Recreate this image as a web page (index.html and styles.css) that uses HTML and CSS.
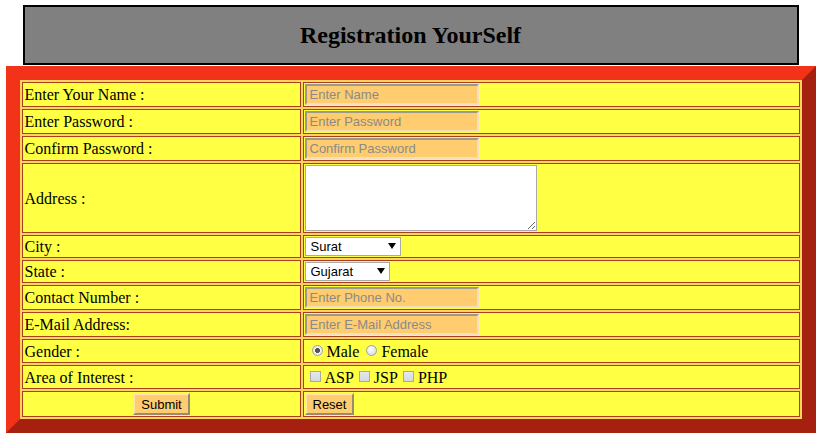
FILE: index.html
```html
<!DOCTYPE html>
<html>
<head>
<meta charset="utf-8">
<title>Registration</title>
<link rel="stylesheet" href="styles.css">
</head>
<body>
<div class="header"><h2 class="title">Registration YourSelf</h2></div>
<form class="form">
<table class="reg">
  <tr>
    <td class="label">Enter Your Name :</td>
    <td class="field"><input class="text" type="text" placeholder="Enter Name"></td>
  </tr>
  <tr>
    <td class="label">Enter Password :</td>
    <td class="field"><input class="text" type="password" placeholder="Enter Password"></td>
  </tr>
  <tr>
    <td class="label">Confirm Password :</td>
    <td class="field"><input class="text" type="password" placeholder="Confirm Password"></td>
  </tr>
  <tr>
    <td class="label">Address :</td>
    <td class="field"><textarea class="area"></textarea></td>
  </tr>
  <tr>
    <td class="label">City :</td>
    <td class="field"><span class="sel sel-city"><select class="select"><option>Surat</option></select></span></td>
  </tr>
  <tr>
    <td class="label">State :</td>
    <td class="field"><span class="sel sel-state"><select class="select"><option>Gujarat</option></select></span></td>
  </tr>
  <tr>
    <td class="label">Contact Number :</td>
    <td class="field"><input class="text" type="text" placeholder="Enter Phone No."></td>
  </tr>
  <tr>
    <td class="label">E-Mail Address:</td>
    <td class="field"><input class="text" type="text" placeholder="Enter E-Mail Address"></td>
  </tr>
  <tr>
    <td class="label">Gender :</td>
    <td class="field choice"><label class="opt"><input class="radio" type="radio" name="g" checked>Male</label> <label class="opt"><input class="radio" type="radio" name="g">Female</label></td>
  </tr>
  <tr>
    <td class="label">Area of Interest :</td>
    <td class="field choice"><label class="opt"><input class="check" type="checkbox">ASP</label> <label class="opt"><input class="check" type="checkbox">JSP</label> <label class="opt"><input class="check" type="checkbox">PHP</label></td>
  </tr>
  <tr>
    <td class="label center"><button class="btn" type="button">Submit</button></td>
    <td class="field"><button class="btn" type="button">Reset</button></td>
  </tr>
</table>
</form>
</body>
</html>
```
FILE: styles.css
```css
html, body {
  margin: 0;
  padding: 0;
  background: #ffffff;
}
body {
  padding-top: 5px;
  font-family: "Liberation Serif", "Times New Roman", serif;
  font-size: 16px;
  color: #000;
}
.header {
  width: 776px;
  height: 60px;
  box-sizing: border-box;
  margin: 0 auto;
  border: 2px solid #000;
  background: #808080;
  display: flex;
  align-items: center;
  justify-content: center;
}
.title {
  margin: 0;
  font-size: 24px;
  font-weight: bold;
}
.form {
  margin: 0;
}
.reg {
  width: 810px;
  table-layout: fixed;
  margin: 1px auto 0;
  border: 14px solid;
  border-color: #f3321a #a5200f #a5200f #f3321a;
  background: #ffd45e;
  border-spacing: 2px;
  border-collapse: separate;
}
.reg td {
  background: #ffff44;
  border: 1px solid #a8401c;
  padding: 1px 1px;
  vertical-align: middle;
  line-height: 17px;
}
.label {
  width: 274px;
  padding-left: 2px !important;
}
.center {
  text-align: center;
}
.text {
  box-sizing: border-box;
  width: 174px;
  height: 21px;
  margin: 0;
  padding: 0 3px;
  border: 2px solid;
  border-color: #9a9a8a #f0e0c0 #f0e0c0 #9a9a8a;
  background: #ffcc70;
  font-family: "Liberation Sans", Arial, sans-serif;
  font-size: 13px;
  display: block;
}
.text::placeholder {
  color: #8a8a8a;
}
.area {
  box-sizing: border-box;
  display: block;
  width: 232px;
  height: 66px;
  margin: 0;
  border: 1px solid #a9a9a9;
  background: #fff;
  resize: both;
}
.sel {
  position: relative;
  display: block;
}
.select {
  appearance: none;
  -webkit-appearance: none;
  display: block;
  box-sizing: border-box;
  height: 19px;
  margin: 0;
  padding: 0 0 0 5px;
  border: 1px solid #a9a9a9;
  border-radius: 0;
  background: #fff;
  font-family: "Liberation Sans", Arial, sans-serif;
  font-size: 13px;
  color: #000;
}
.sel-city .select { width: 96px; }
.sel-state .select { width: 85px; }
.sel::after {
  content: "";
  position: absolute;
  top: 6px;
  border-left: 4px solid transparent;
  border-right: 4px solid transparent;
  border-top: 6px solid #000;
}
.sel-city::after { left: 83px; }
.sel-state::after { left: 72px; }
.choice {
  padding-left: 6px !important;
  height: 20px;
}
.opt {
  display: inline-flex;
  align-items: center;
  margin-right: 1px;
}
.radio {
  appearance: none;
  -webkit-appearance: none;
  width: 11px;
  height: 11px;
  margin: 0 4px 0 2px;
  border: 1px solid #a0a0a0;
  border-radius: 50%;
  background: radial-gradient(circle at 40% 35%, #ffffff 0, #dcdcdc 80%);
  box-sizing: border-box;
  position: relative;
  top: -1px;
}
.radio:checked {
  background: radial-gradient(circle, #555 0, #555 2.2px, #f4f4f4 2.8px, #dcdcdc 100%);
}
.check {
  appearance: none;
  -webkit-appearance: none;
  width: 11px;
  height: 11px;
  margin: 0 4px 0 0;
  border: 1px solid #a8a8a8;
  background: linear-gradient(#e4e8ee, #d4d8e0);
  box-sizing: border-box;
  position: relative;
  top: -1px;
}
.btn {
  box-sizing: border-box;
  height: 22px;
  margin: 0;
  padding: 0 6px;
  border: 2px solid;
  border-color: #ffe4b0 #9a8a70 #9a8a70 #ffe4b0;
  background: #ffcc70;
  font-family: "Liberation Sans", Arial, sans-serif;
  font-size: 13px;
  color: #000;
  vertical-align: middle;
}
```
